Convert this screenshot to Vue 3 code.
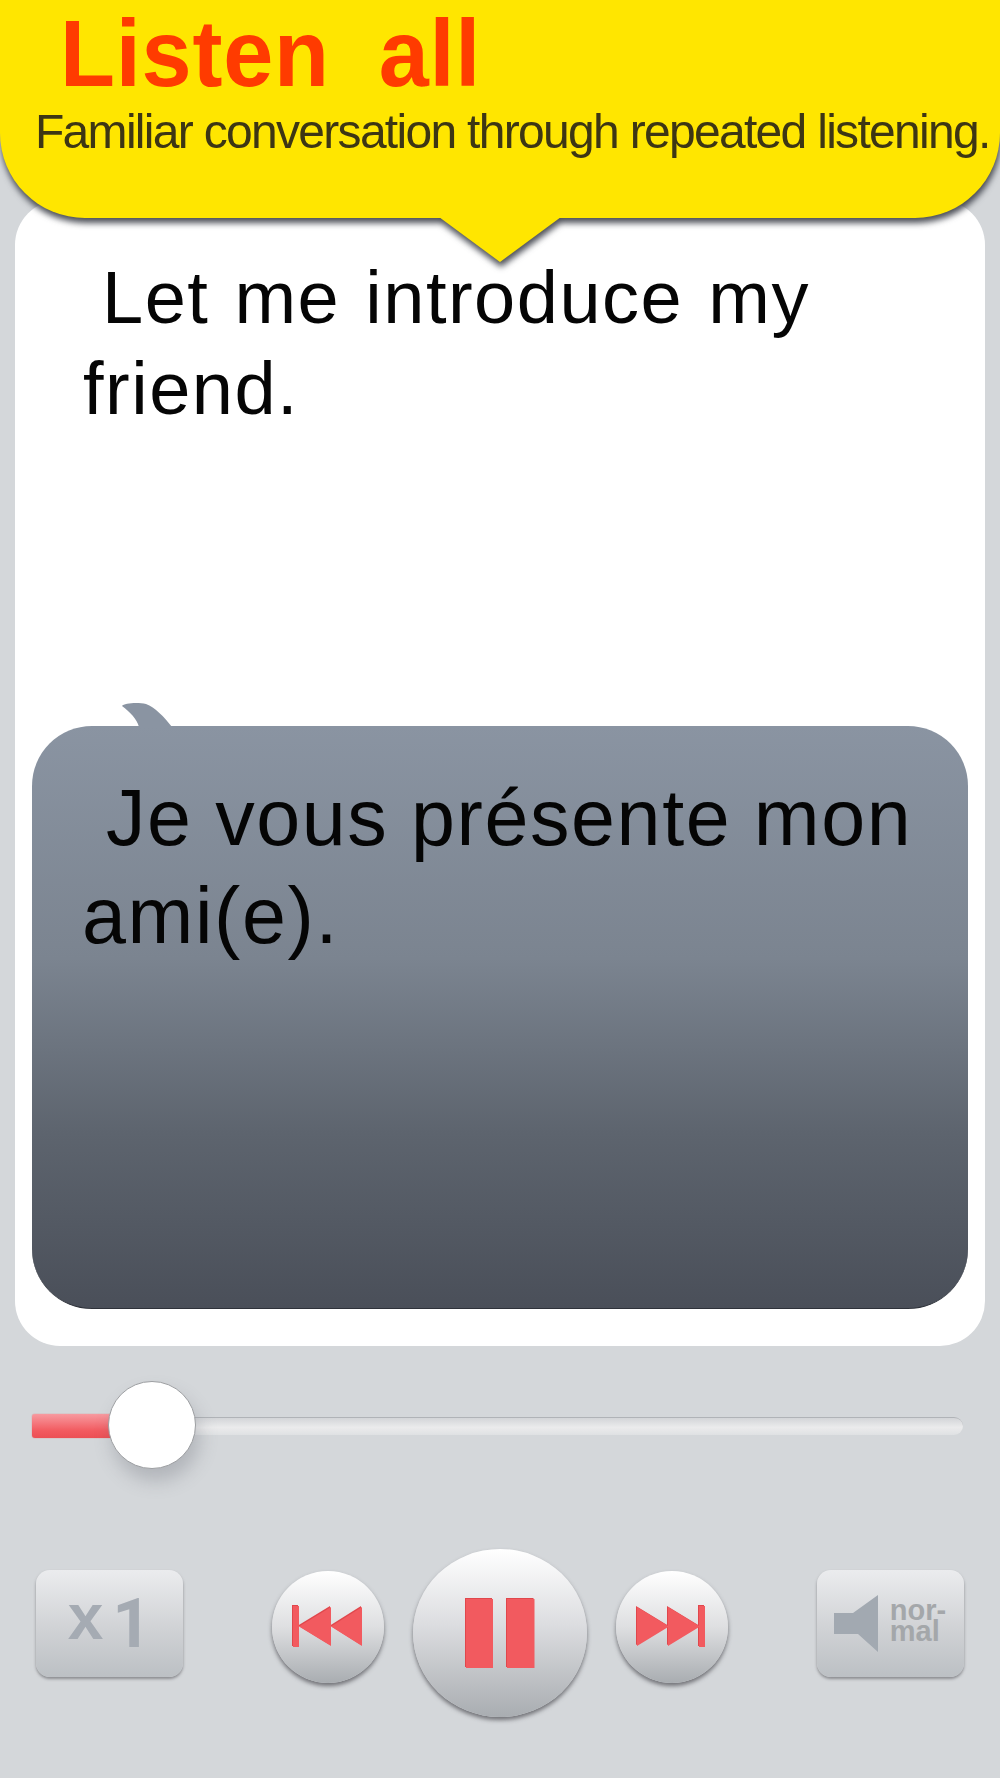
<template>
  <div class="page">
    <!-- yellow banner -->
    <header class="banner">
      <h1 class="title">Listen all</h1>
      <p class="subtitle">Familiar conversation through repeated listening.</p>
      <span class="banner-tail"></span>
    </header>

    <main class="card">
      <p class="phrase phrase-top">{{ phrase.source }}</p>
      <div class="bubble">
        <svg class="bubble-tail" width="50" height="26" viewBox="0 0 50 26">
          <path d="M0 4 C2 1 16 0 24 2 C33 5 42 15 50 25 L17 25 C15 17 8 10 0 4 Z" fill="#8a94a2" />
        </svg>
        <p class="phrase phrase-bubble">{{ phrase.target }}</p>
      </div>
    </main>

    <div class="slider">
      <div class="track">
        <div class="progress" :style="{ width: progress + 'px' }"></div>
        <div class="knob" :style="{ left: progress + 'px' }"></div>
      </div>
    </div>

    <div class="controls">
      <button class="square-btn speed">
        <span class="speed-x">x</span>
        <span class="speed-num">1</span>
      </button>

      <div class="transport">
        <button class="round-btn">
          <svg class="icon" width="70" height="42" viewBox="0 0 70 42">
            <path d="M0 0H6V41H0Z M6 20.500L38 1V40Z M38 20.500L69 1V40Z" fill="#f25a5f" />
          </svg>
        </button>
        <button class="round-btn play">
          <svg class="icon" width="69" height="69" viewBox="0 0 69 69">
            <path d="M0 0H27V69H0Z M41 0H68.500V69H41Z" fill="#f25a5f" />
          </svg>
        </button>
        <button class="round-btn">
          <svg class="icon" width="70" height="42" viewBox="0 0 70 42">
            <path d="M0 1L32 20.500L0 40Z M31 1L63 20.500L31 40Z M62 0H68V41H62Z" fill="#f25a5f" />
          </svg>
        </button>
      </div>

      <button class="square-btn volume">
        <svg width="46" height="58" viewBox="0 0 46 58">
          <path d="M0 18H19L44 0V57L24 39H0Z" fill="#a2a9b1" />
        </svg>
        <span class="volume-label">nor-<br />mal</span>
      </button>
    </div>
  </div>
</template>

<script setup>
import { ref } from 'vue'

const phrase = ref({
  source: 'Let me introduce my friend.',
  target: 'Je vous présente mon ami(e).'
})

const progress = ref(120)
</script>

<style scoped>
.page {
  width: 1000px;
  height: 1778px;
  background: #d4d7da;
  display: flex;
  flex-direction: column;
  overflow: hidden;
  font-family: "Liberation Sans", Arial, sans-serif;
}

.banner {
  position: relative;
  z-index: 2;
  height: 218px;
  flex: none;
  background: #ffe600;
  border-radius: 0 0 85px 85px;
  filter: drop-shadow(1px 5px 3px rgba(45, 48, 58, 0.85));
}

.banner-tail {
  position: absolute;
  left: 439px;
  top: 217px;
  width: 122px;
  height: 45px;
  background: #ffe600;
  clip-path: polygon(0 0, 100% 0, 50% 100%);
}

.title {
  margin: 0;
  padding-left: 60px;
  font-size: 90px;
  line-height: 100px;
  font-weight: 700;
  letter-spacing: 0.8px;
  word-spacing: 23px;
  color: #ff3b00;
  transform: scaleY(1.06);
  transform-origin: left top;
}

.subtitle {
  margin: 5px 0 0;
  padding-left: 35px;
  font-size: 48px;
  line-height: 54px;
  letter-spacing: -1.7px;
  white-space: nowrap;
  color: #3d3614;
}

.card {
  flex: none;
  margin: -18px 15px 0;
  height: 1146px;
  box-sizing: border-box;
  background: #fff;
  border-radius: 45px;
  padding: 0 17px;
  display: flex;
  flex-direction: column;
}

.phrase {
  margin: 0;
  color: #050505;
}

.phrase-top {
  height: 526px;
  box-sizing: border-box;
  padding: 52px 20px 0 51px;
  text-indent: 19px;
  font-size: 74px;
  line-height: 91px;
  letter-spacing: 1.5px;
  word-spacing: 3px;
}

.phrase-bubble {
  padding: 0 20px 0 50px;
  text-indent: 24px;
  font-size: 79px;
  line-height: 98px;
  letter-spacing: 1.6px;
  word-spacing: -1px;
}

.bubble {
  position: relative;
  flex: none;
  height: 583px;
  box-sizing: border-box;
  padding-top: 43px;
  border-radius: 60px;
  border-bottom: 1px solid #2e323a;
  background: linear-gradient(#8a94a2 0%, #7b8490 40%, #5d646e 70%, #4a4f59 100%);
}

.bubble-tail {
  position: absolute;
  left: 90px;
  top: -24px;
}

.slider {
  flex: none;
  margin: 0 37px 0 32px;
  padding-top: 71px;
}

.track {
  position: relative;
  height: 18px;
  box-sizing: border-box;
  border-radius: 9px;
  border-top: 1px solid #b0b3b7;
  background: linear-gradient(#d3d5d8, #ebebec 55%, #dfe1e3);
}

.progress {
  position: absolute;
  left: 0;
  top: -4px;
  height: 24px;
  border-radius: 3px;
  background: linear-gradient(#f79aa0, #f25a5f 70%, #ec4f54);
  box-shadow: 0 0 1px #e8484d;
}

.knob {
  position: absolute;
  top: -37px;
  width: 88px;
  height: 88px;
  margin-left: -44px;
  box-sizing: border-box;
  border-radius: 50%;
  background: #fff;
  border: 1px solid #9d9fa2;
  box-shadow: 4px 12px 18px rgba(90, 95, 105, 0.28);
}

.controls {
  flex: none;
  margin-top: 135px;
  display: flex;
  align-items: flex-start;
  padding: 0 36px;
  justify-content: space-between;
}

.transport {
  display: flex;
  align-items: flex-start;
  gap: 29px;
  margin-top: -21px;
}

button {
  border: 0;
  padding: 0;
  display: flex;
  align-items: center;
  justify-content: center;
  font-family: inherit;
}

.square-btn {
  width: 147px;
  height: 107px;
  border-radius: 14px;
  background: linear-gradient(#ebecee, #d0d2d5 55%, #bcc0c4);
  box-shadow: 0 2px 3px rgba(100, 100, 105, 0.65);
}

.speed {
  gap: 9px;
  font-weight: 700;
  color: #a5abb3;
}

.speed-x {
  font-size: 64px;
  line-height: 64px;
  margin-bottom: 13px;
}

.speed-num {
  font-family: Roboto, sans-serif;
  font-size: 68px;
  line-height: 68px;
}

.volume {
  gap: 10px;
  padding-right: 1px;
}

.volume-label {
  font-size: 29px;
  line-height: 21px;
  font-weight: 700;
  color: #a4a7aa;
  text-align: left;
  margin-bottom: 6px;
}

.round-btn {
  width: 112px;
  height: 112px;
  margin-top: 22px;
  border-radius: 50%;
  background: linear-gradient(#fff, #dedfe1 50%, #a9adb1);
  box-shadow: 0 3px 4px rgba(80, 80, 85, 0.75);
}

.round-btn.play {
  width: 174px;
  height: 168px;
  margin-top: 0;
  background: linear-gradient(#fff, #dcdde0 45%, #a9adb1);
}

.icon {
  filter: drop-shadow(-1px -1px 0 #e0474c);
}
</style>

<style>
body {
  margin: 0;
}
</style>
